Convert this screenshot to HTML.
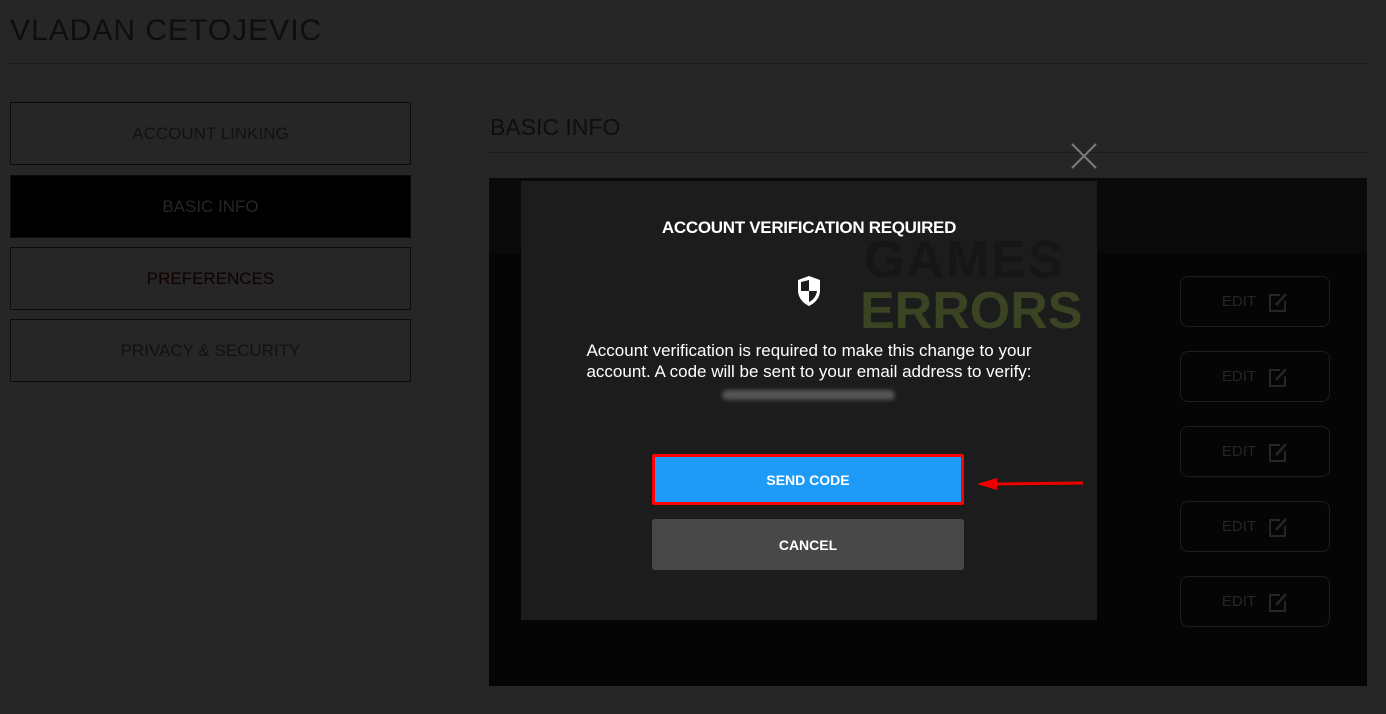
<!DOCTYPE html>
<html><head><style>
body{margin:0;width:1386px;height:714px;background:#262626;font-family:"Liberation Sans",sans-serif;position:relative;overflow:hidden}
.a{position:absolute}
.nav{position:absolute;left:10px;width:399px;height:61px;border:1px solid #0c0c0c;color:#111;font-size:17px;display:flex;align-items:center;justify-content:center}
.edit{position:absolute;left:1180px;width:148px;height:49px;border:1px solid #1e1e1e;border-radius:8px;color:#262626;font-size:15px;display:flex;align-items:center;justify-content:center;gap:12px}
.btn{position:absolute;left:652px;width:312px;height:51px;border-radius:3px;color:#fff;font-weight:bold;font-size:14px;display:flex;align-items:center;justify-content:center}
</style></head><body>
<div class="a" style="left:10px;top:14px;font-size:30px;letter-spacing:1px;color:#0e0e0e">VLADAN CETOJEVIC</div>
<div class="a" style="left:10px;top:63px;width:1356px;height:1px;background:#1a1a1a"></div>
<div class="nav" style="top:102px">ACCOUNT LINKING</div>
<div class="nav" style="top:175px;background:#000;color:#262626">BASIC INFO</div>
<div class="nav" style="top:247px;color:#0f0000">PREFERENCES</div>
<div class="nav" style="top:319px">PRIVACY &amp; SECURITY</div>
<div class="a" style="left:490px;top:114px;font-size:23px;color:#0e0e0e">BASIC INFO</div>
<div class="a" style="left:489px;top:152px;width:878px;height:1px;background:#1a1a1a"></div>
<div class="a" style="left:489px;top:178px;width:878px;height:508px;background:#050505"></div>
<div class="a" style="left:489px;top:178px;width:878px;height:75px;background:#0a0a0a"></div>
<svg class="a" style="left:1070px;top:142px" width="28" height="28"><path d="M2 2L26 26M26 2L2 26" stroke="#7a7a7a" stroke-width="2"/></svg>
<div class="edit" style="top:276px">EDIT <svg width="20" height="20"><path d="M12 3H2V19H17V9" fill="none" stroke="#262626" stroke-width="2"/><path d="M8 13L18 2" stroke="#262626" stroke-width="2.5"/></svg></div>
<div class="edit" style="top:351px">EDIT <svg width="20" height="20"><path d="M12 3H2V19H17V9" fill="none" stroke="#262626" stroke-width="2"/><path d="M8 13L18 2" stroke="#262626" stroke-width="2.5"/></svg></div>
<div class="edit" style="top:426px">EDIT <svg width="20" height="20"><path d="M12 3H2V19H17V9" fill="none" stroke="#262626" stroke-width="2"/><path d="M8 13L18 2" stroke="#262626" stroke-width="2.5"/></svg></div>
<div class="edit" style="top:501px">EDIT <svg width="20" height="20"><path d="M12 3H2V19H17V9" fill="none" stroke="#262626" stroke-width="2"/><path d="M8 13L18 2" stroke="#262626" stroke-width="2.5"/></svg></div>
<div class="edit" style="top:576px">EDIT <svg width="20" height="20"><path d="M12 3H2V19H17V9" fill="none" stroke="#262626" stroke-width="2"/><path d="M8 13L18 2" stroke="#262626" stroke-width="2.5"/></svg></div>
<div class="a" style="left:521px;top:181px;width:576px;height:439px;background:#1c1c1c"></div>
<div class="a" style="left:864px;top:234px;font-size:52px;font-weight:bold;color:#161616;line-height:1;letter-spacing:2px">GAMES</div>
<div class="a" style="left:860px;top:285px;font-size:52px;font-weight:bold;color:#3a4422;line-height:1">ERRORS</div>
<div class="a" style="left:521px;top:218px;width:576px;text-align:center;color:#fff;font-weight:bold;font-size:17px;letter-spacing:-0.3px">ACCOUNT VERIFICATION REQUIRED</div>
<svg class="a" style="left:796px;top:275px" width="26" height="32" viewBox="0 0 26 32"><path d="M13 1L24 5V15C24 23 19 28 13 31C7 28 2 23 2 15V5Z" fill="#fff"/><path d="M13 5V16H5V7ZM13 16H21C20 22 17 25 13 27Z" fill="#1c1c1c"/></svg>
<div class="a" style="left:511px;top:340px;width:596px;text-align:center;color:#fff;font-size:17px;line-height:21px">Account verification is required to make this change to your<br>account. A code will be sent to your email address to verify:</div>
<div class="a" style="left:722px;top:390px;width:173px;height:10px;background:#555;border-radius:5px;filter:blur(2px)"></div>
<div class="btn" style="top:454px;left:652px;width:306px;height:45px;background:#1e9bf7;border:3px solid #f00;border-radius:2px">SEND CODE</div>
<div class="btn" style="top:519px;background:#484848">CANCEL</div>
<svg class="a" style="left:975px;top:476px" width="112" height="16"><path d="M20 8L108 7" stroke="#e00" stroke-width="3"/><path d="M2 8L22 2V14Z" fill="#e00"/></svg>
</body></html>
